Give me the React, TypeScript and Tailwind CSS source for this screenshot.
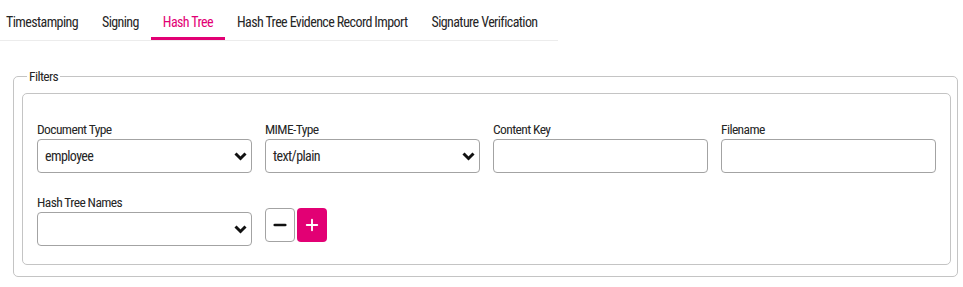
import { Minus, Plus } from "lucide-react";

const tabs = ["Timestamping", "Signing", "Hash Tree", "Hash Tree Evidence Record Import", "Signature Verification"];

function Chevron() {
  return (
    <svg width="13" height="9" viewBox="0 0 13 9" className="shrink-0">
      <path d="M1.5 1.5 L6.5 6.5 L11.5 1.5" fill="none" stroke="#111" strokeWidth="3" />
    </svg>
  );
}

function SelectBox({ value }: { value?: string }) {
  return (
    <div className="flex items-center justify-between h-[34px] pl-[7px] pr-[4px] border border-[#a3a3a3] rounded-[4px] bg-white text-[14px] text-[#262626]">
      <span>{value}</span>
      <Chevron />
    </div>
  );
}

function TextBox() {
  return <div className="h-[34px] border border-[#a3a3a3] rounded-[4px] bg-white" />;
}

function Field({ label, children }: { label: string; children: React.ReactNode }) {
  return (
    <div className="flex flex-col">
      <label className="text-[13.5px] leading-5 text-[#262626]">{label}</label>
      {children}
    </div>
  );
}

export default function App() {
  return (
    <div className="w-[963px] h-[287px] bg-white overflow-hidden tracking-[-0.6px] font-['Roboto_Condensed','Liberation_Sans',sans-serif]">
      {/* Tabs */}
      <nav className="flex w-fit -ml-1.5 pr-2 border-b border-[#ececec]">
        {tabs.map((t) => (
          <div
            key={t}
            className={
              t === "Hash Tree"
                ? "px-3 pt-3 pb-[5px] text-[14px] leading-5 text-[#e20074] border-b-[3px] border-[#e20074]"
                : "px-3 pt-3 pb-[5px] text-[14px] leading-5 text-[#262626] border-b-[3px] border-transparent"
            }
          >
            {t}
          </div>
        ))}
      </nav>

      {/* Filters */}
      <fieldset className="ml-[13px] mt-[25px] w-[945px] border border-[#c4c4c4] rounded-[5px] pl-2 pr-1.5 pt-[7px] pb-[11px]">
        <legend className="ml-[5px] px-[2px] text-[13.5px] leading-5 text-[#262626]">Filters</legend>
        <div className="w-[929px] border border-[#c4c4c4] rounded-[5px] px-[14px] pt-[25px] pb-[18px]">
          <div className="grid grid-cols-4 gap-x-[13px] gap-y-[19px]">
            <Field label="Document Type">
              <SelectBox value="employee" />
            </Field>
            <Field label="MIME-Type">
              <SelectBox value="text/plain" />
            </Field>
            <Field label="Content Key">
              <TextBox />
            </Field>
            <Field label="Filename">
              <TextBox />
            </Field>
            <Field label="Hash Tree Names">
              <SelectBox />
            </Field>
            <div className="flex items-start pt-4">
              <button className="flex items-center justify-center w-[30px] h-[34px] border border-[#a3a3a3] rounded-[4px] bg-white text-[#111]">
                <Minus size={18} strokeWidth={3.5} />
              </button>
              <button className="flex items-center justify-center w-[30px] h-[34px] ml-[2px] rounded-[4px] bg-[#e20074] text-white">
                <Plus size={18} strokeWidth={2.5} />
              </button>
            </div>
          </div>
        </div>
      </fieldset>
    </div>
  );
}
